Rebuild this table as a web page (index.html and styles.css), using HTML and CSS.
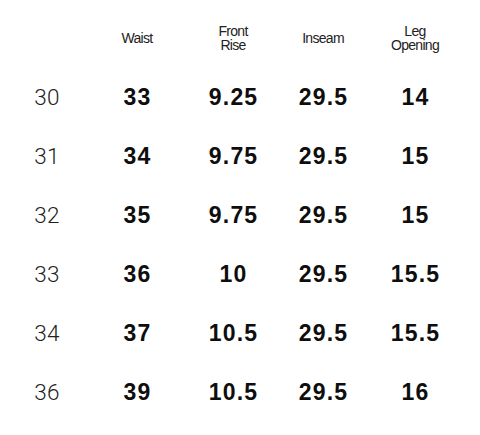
FILE: index.html
```html
<!DOCTYPE html>
<html lang="en">
<head>
<meta charset="utf-8">
<title>Size chart</title>
<link rel="stylesheet" href="styles.css">
</head>
<body>
<div class="chart">
  <div class="head"></div>
  <div class="head">Waist</div>
  <div class="head">Front<br>Rise</div>
  <div class="head">Inseam</div>
  <div class="head">Leg<br>Opening</div>

  <div class="size">30</div><div class="val">33</div><div class="val">9.25</div><div class="val">29.5</div><div class="val">14</div>
  <div class="size">31</div><div class="val">34</div><div class="val">9.75</div><div class="val">29.5</div><div class="val">15</div>
  <div class="size">32</div><div class="val">35</div><div class="val">9.75</div><div class="val">29.5</div><div class="val">15</div>
  <div class="size">33</div><div class="val">36</div><div class="val">10</div><div class="val">29.5</div><div class="val">15.5</div>
  <div class="size">34</div><div class="val">37</div><div class="val">10.5</div><div class="val">29.5</div><div class="val">15.5</div>
  <div class="size">36</div><div class="val">39</div><div class="val">10.5</div><div class="val">29.5</div><div class="val">16</div>
</div>
</body>
</html>
```
FILE: styles.css
```css
html, body {
  margin: 0;
  padding: 0;
  background: #ffffff;
}
body {
  width: 480px;
  height: 435px;
  overflow: hidden;
  font-family: "Liberation Sans", Arial, sans-serif;
  color: #111;
}
.chart {
  display: grid;
  grid-template-columns: 90px 90px 102px 78px 106px;
  grid-template-rows: 68px repeat(6, 59px);
  margin-left: 2px;
}
.head {
  display: flex;
  align-items: center;
  justify-content: center;
  padding-top: 7px;
  text-align: center;
  font-size: 14px;
  line-height: 14px;
  letter-spacing: -0.7px;
  color: #222;
}
.size, .val {
  text-align: center;
  font-size: 22px;
  line-height: 59px;
}
.size {
  font-family: Roboto, "Liberation Sans", sans-serif;
  font-weight: 300;
  font-size: 22.5px;
  letter-spacing: 0.3px;
  color: #222;
}
.val {
  font-weight: 700;
  font-size: 23px;
  letter-spacing: 1.2px;
  padding-left: 1.2px;
  color: #0e0e0e;
}
```
